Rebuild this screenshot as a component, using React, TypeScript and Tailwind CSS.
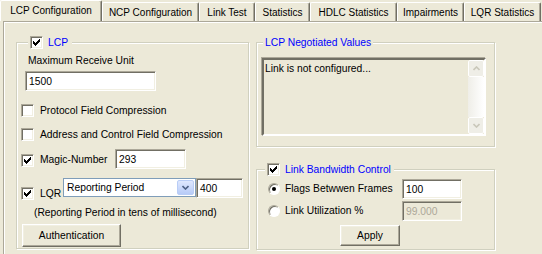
import React from 'react'
import clsx from 'clsx'

const sunken =
    "border border-t-[#ACA899] border-l-[#ACA899] border-b-white border-r-white shadow-[inset_1px_1px_0_#716F64,inset_-1px_-1px_0_#F1EFE2]"
const raised =
    "border border-t-white border-l-white border-b-[#716F64] border-r-[#716F64] shadow-[inset_-1px_-1px_0_#ACA899,inset_1px_1px_0_#F1EFE2]"

const tabs = [
    { name: "LCP Configuration", w: "w-[102px]", active: true },
    { name: "NCP Configuration", w: "w-[97px]" },
    { name: "Link Test", w: "w-[56px]" },
    { name: "Statistics", w: "w-[55px]" },
    { name: "HDLC Statistics", w: "w-[87px]" },
    { name: "Impairments", w: "w-[67px]" },
    { name: "LQR Statistics", w: "w-[77px]" },
]

// classic 7x7 tick, one 3px column per x
const tick = [2, 3, 4, 3, 2, 1, 0]

const CheckBox = ({ on }: { on?: boolean }) => (
    <span className={clsx("flex h-[13px] w-[13px] shrink-0 items-center justify-center bg-white", sunken)}>
        {on && (
            <svg width="7" height="7" viewBox="0 0 7 7" shapeRendering="crispEdges">
                {tick.map((y, x) => (
                    <rect key={x} x={x} y={y} width="1" height="3" fill="#000" />
                ))}
            </svg>
        )}
    </span>
)

const Radio = ({ on }: { on?: boolean }) => (
    <span className="flex h-[12px] w-[12px] shrink-0 items-center justify-center rounded-full border border-t-[#ACA899] border-l-[#ACA899] border-b-white border-r-white bg-white shadow-[inset_1px_1px_0_#716F64]">
        {on && <span className="h-[4px] w-[4px] rounded-full bg-black" />}
    </span>
)

const TextBox = ({ value, className, disabled }: { value: string; className?: string; disabled?: boolean }) => (
    <div
        className={clsx(
            "flex h-[20px] items-center pl-[3px] leading-[13px]",
            sunken,
            disabled ? "bg-[#ECE9D8] text-[#ACA899]" : "bg-white",
            className
        )}
    >
        {value}
    </div>
)

const Button = ({ label, className }: { label: string; className?: string }) => (
    <div className={clsx("flex items-center justify-center bg-[#ECE9D8]", raised, className)}>{label}</div>
)

const Group = ({ legend, className, children }: { legend: React.ReactNode; className?: string; children: React.ReactNode }) => (
    <div className={clsx("relative flex flex-col border border-[#D0D0BF] shadow-[inset_1px_1px_0_#fff,1px_1px_0_#fff]", className)}>
        {legend}
        {children}
    </div>
)

const Chevron = ({ up, color }: { up?: boolean; color: string }) => (
    <svg width="7" height="5" viewBox="0 0 7 5">
        <polyline
            points={up ? "0.5,4 3.5,1 6.5,4" : "0.5,1 3.5,4 6.5,1"}
            fill="none"
            stroke={color}
            strokeWidth="1.6"
        />
    </svg>
)

export default function App() {
    return (
        <div className="flex h-[254px] w-[542px] flex-col overflow-hidden bg-[#ECE9D8] font-['Liberation_Sans',Arial,sans-serif] text-[10.3px] text-black">
            {/* Tab strip */}
            <div className="flex h-[21px] shrink-0 items-end text-[10px]">
                {tabs.map((t) => (
                    <div
                        key={t.name}
                        className={clsx(
                            "flex items-center justify-center rounded-t-[2px] border-l border-t border-white border-r border-r-[#716F64] shadow-[inset_-1px_0_0_#ACA899]",
                            t.w,
                            t.active ? "h-[21px] pb-[2px]" : "h-[19px]"
                        )}
                    >
                        {t.name}
                    </div>
                ))}
            </div>

            {/* Tab page */}
            <div className="ml-[3px] flex flex-1 gap-[7px] border-l border-t border-[#ACA899] pl-[12px] pt-[20px] shadow-[inset_1px_1px_0_#fff]">
                {/* LCP group */}
                <Group
                    className="h-[207px] w-[233px] pl-[4px]"
                    legend={
                        <div className="absolute -top-[7px] left-[11px] flex h-[13px] items-center gap-[5px] bg-[#ECE9D8] pl-[2px] pr-[4px]">
                            <CheckBox on />
                            <span className="text-[#0000FF]">LCP</span>
                        </div>
                    }
                >
                    <div className="ml-[7px] mt-[11px] h-[13px] leading-[13px]">Maximum Receive Unit</div>
                    <TextBox value="1500" className="ml-[4px] mt-[4px] w-[131px]" />

                    <div className="mt-[13px] flex h-[13px] items-center gap-[6px]">
                        <CheckBox />
                        <span>Protocol Field Compression</span>
                    </div>
                    <div className="mt-[11px] flex h-[13px] items-center gap-[6px]">
                        <CheckBox />
                        <span>Address and Control Field Compression</span>
                    </div>

                    <div className="mt-[8px] flex h-[20px] items-center">
                        <div className="flex items-center gap-[6px] pt-[2px]">
                            <CheckBox on />
                            <span className="w-[75px]">Magic-Number</span>
                        </div>
                        <TextBox value="293" className="w-[71px]" />
                    </div>

                    <div className="mt-[9px] flex items-start">
                        <div className="mt-[9px] flex h-[13px] items-center gap-[6px]">
                            <CheckBox on />
                            <span className="w-[23px]">LQR</span>
                        </div>
                        <div className="flex h-[19px] w-[133px] items-center border border-[#7F9DB9] bg-white pl-[3px] pr-[1px]">
                            <span className="flex-1">Reporting Period</span>
                            <span className="flex h-[15px] w-[17px] items-center justify-center rounded-[2px] border border-[#B9CDF6] bg-gradient-to-b from-[#DFE8FE] to-[#B7CBF7]">
                                <Chevron color="#4D6185" />
                            </span>
                        </div>
                        <TextBox value="400" className="w-[47px]" />
                    </div>

                    <div className="ml-[13px] mt-[6px] h-[13px] leading-[13px]">(Reporting Period in tens of millisecond)</div>
                    <Button label="Authentication" className="ml-[1px] mt-[5px] h-[23px] w-[99px]" />
                </Group>

                {/* Right column */}
                <div className="flex flex-col gap-[22px]">
                    <Group
                        className="h-[105px] w-[239px] pl-[5px]"
                        legend={
                            <div className="absolute -top-[7px] left-[6px] h-[13px] bg-[#ECE9D8] px-[2px] leading-[13px] text-[#0000FF]">
                                LCP Negotiated Values
                            </div>
                        }
                    >
                        <div className="mt-[15px] flex h-[78px] w-[224px] border-2 border-t-[#716F64] border-l-[#716F64] border-b-white border-r-white shadow-[-1px_-1px_0_#ACA899]">
                            <div className="flex-1 pl-[1px] pt-[2px] leading-[13px]">Link is not configured...</div>
                            <div className="flex w-[16px] flex-col">
                                <div className="flex h-[17px] items-center justify-center rounded-[2px] border border-white bg-[#EFEEE7]">
                                    <Chevron up color="#C9C7BA" />
                                </div>
                                <div className="flex-1 bg-gradient-to-r from-[#EFEEE8] to-white" />
                                <div className="flex h-[17px] items-center justify-center rounded-[2px] border border-white bg-[#EFEEE7]">
                                    <Chevron color="#C9C7BA" />
                                </div>
                            </div>
                        </div>
                    </Group>

                    <Group
                        className="h-[81px] w-[239px] pl-[11px]"
                        legend={
                            <div className="absolute -top-[7px] left-[8px] flex h-[13px] items-center gap-[5px] bg-[#ECE9D8] pl-[2px] pr-[3px]">
                                <CheckBox on />
                                <span className="text-[#0000FF]">Link Bandwidth Control</span>
                            </div>
                        }
                    >
                        <div className="mt-[9px] flex h-[20px] items-center">
                            <div className="flex items-center gap-[5px]">
                                <Radio on />
                                <span className="w-[117px]">Flags Betwwen Frames</span>
                            </div>
                            <TextBox value="100" className="w-[60px]" />
                        </div>
                        <div className="mt-[2px] flex h-[20px] items-center">
                            <div className="flex items-center gap-[5px]">
                                <Radio />
                                <span className="w-[117px]">Link Utilization %</span>
                            </div>
                            <TextBox value="99.000" className="w-[60px]" disabled />
                        </div>
                        <Button label="Apply" className="ml-[72px] mt-[4px] h-[21px] w-[60px]" />
                    </Group>
                </div>
            </div>
        </div>
    )
}
